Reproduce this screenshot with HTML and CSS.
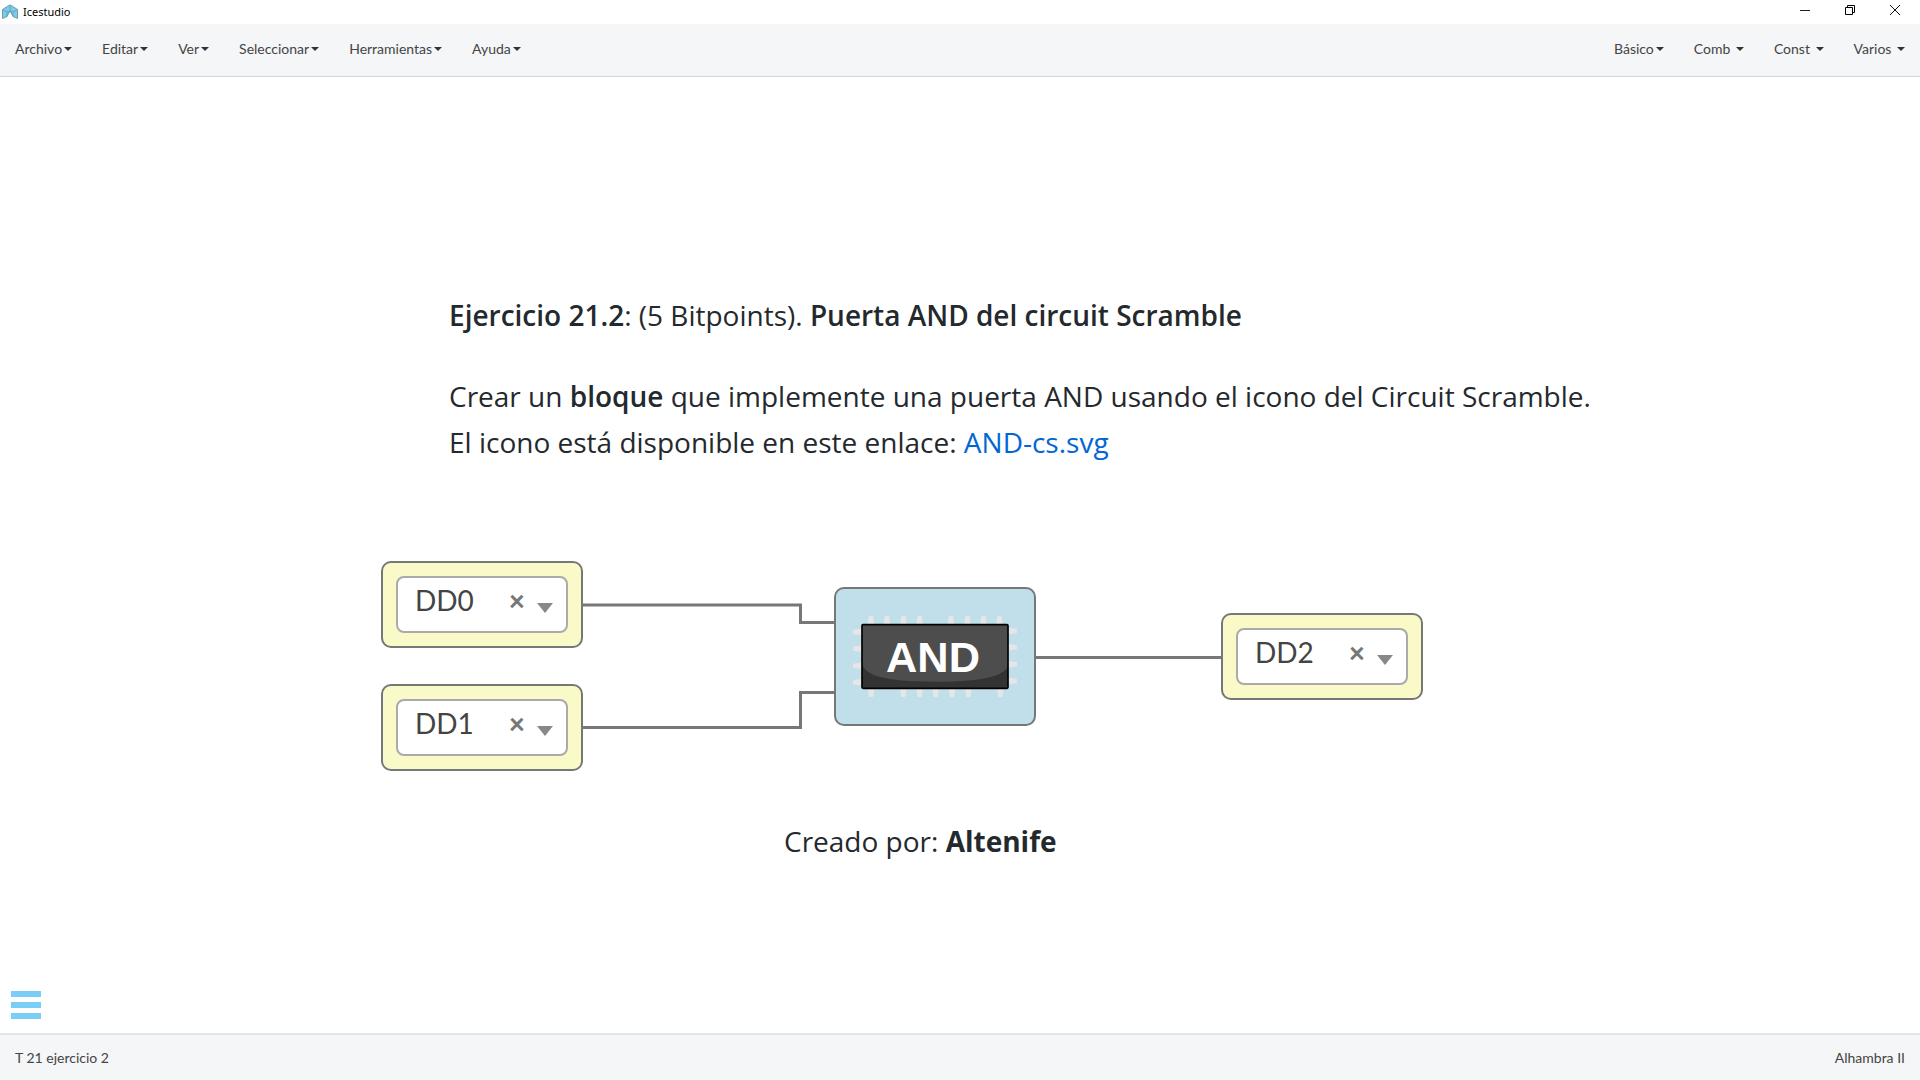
FILE: index.html
```html
<!DOCTYPE html>
<html lang="es">
<head>
<meta charset="utf-8">
<title>Icestudio</title>
<link rel="stylesheet" href="styles.css">
</head>
<body>
<header class="titlebar">
  <svg class="logo" width="16" height="16" viewBox="0 0 16 16"><path d="M.5 5.500 6 2 8 1l2 1 5.500 3.500v9L11 12.500 8 7l-3 5.500-4.500 2z" fill="#7ccbe9" stroke="#6d9db0"/><path d="M.5 5.500 5 8v4.500M15.500 5.500 11 8v4.500M8 1v6L5 8M8 7l3 1" fill="none" stroke="#5b9fba" stroke-width=".8"/></svg>
  <span class="app-name">Icestudio</span>
  <div class="window-controls">
    <button aria-label="Minimizar"><svg width="12" height="12" viewBox="0 0 12 12"><path d="M1 6.500h10" stroke="#222" fill="none"/></svg></button>
    <button aria-label="Restaurar"><svg width="12" height="12" viewBox="0 0 12 12"><path d="M1.500 3.500h7v7h-7zM3.500 3.500v-2h7v7h-2" stroke="#000" fill="none"/></svg></button>
    <button aria-label="Cerrar"><svg width="12" height="12" viewBox="0 0 12 12"><path d="M1 1l10 10M11 1 1 11" stroke="#111" fill="none"/></svg></button>
  </div>
</header>
<nav class="menubar">
  <div class="menu-group">
    <button class="menu">Archivo<i class="caret"></i></button>
    <button class="menu">Editar<i class="caret"></i></button>
    <button class="menu">Ver<i class="caret"></i></button>
    <button class="menu">Seleccionar<i class="caret"></i></button>
    <button class="menu">Herramientas<i class="caret"></i></button>
    <button class="menu">Ayuda<i class="caret"></i></button>
  </div>
  <div class="menu-group">
    <button class="menu">Básico<i class="caret"></i></button>
    <button class="menu">Comb <i class="caret"></i></button>
    <button class="menu">Const <i class="caret"></i></button>
    <button class="menu">Varios <i class="caret"></i></button>
  </div>
</nav>
<main class="canvas">
  <svg class="wires" width="1440" height="720" viewBox="0 0 1440 720"><path d="M582 528H800.500V545.500H835M582 650.500H800.500V615.500H835M1035 580.500H1222"/></svg>
  <section class="note statement">
    <p><b>Ejercicio 21.2</b>: (5 Bitpoints). <b>Puerta AND del circuit Scramble</b></p>
    <p>Crear un <b>bloque</b> que implemente una puerta AND usando el icono del Circuit Scramble.<br>El icono está disponible en este enlace: <a href="#">AND-cs.svg</a></p>
  </section>
  <div class="port port-a">
    <div class="combo">
      <select aria-label="Entrada A"><option>DD0</option></select>
      <button class="clear" aria-label="Borrar DD0">×</button>
      <i class="arrow"></i>
    </div>
  </div>
  <div class="port port-b">
    <div class="combo">
      <select aria-label="Entrada B"><option>DD1</option></select>
      <button class="clear" aria-label="Borrar DD1">×</button>
      <i class="arrow"></i>
    </div>
  </div>
  <div class="gate">
    <svg width="164" height="81" viewBox="99 138 492 243">
      <defs>
        <path id="pin" d="M-9 24V18L-6 0H6L9 18V24Z" fill="#e6e6e6"/>
      </defs>
      <g>
        <use href="#pin" x="153" y="138"/><use href="#pin" x="201" y="138"/><use href="#pin" x="250" y="138"/><use href="#pin" x="299" y="138"/>
        <use href="#pin" x="393" y="138"/><use href="#pin" x="442" y="138"/><use href="#pin" x="490" y="138"/><use href="#pin" x="538" y="138"/>
      </g>
      <g transform="translate(0 381) scale(1 -1)">
        <use href="#pin" x="153"/><use href="#pin" x="250"/><use href="#pin" x="299"/><use href="#pin" x="347"/>
        <use href="#pin" x="396"/><use href="#pin" x="445"/><use href="#pin" x="541"/>
      </g>
      <g transform="translate(99 0) rotate(-90)">
        <use href="#pin" x="-186"/><use href="#pin" x="-236"/><use href="#pin" x="-287"/><use href="#pin" x="-337"/>
      </g>
      <g transform="translate(591 0) rotate(90)">
        <use href="#pin" x="183"/><use href="#pin" x="232"/><use href="#pin" x="283"/><use href="#pin" x="333"/>
      </g>
      <rect x="126" y="164" width="438" height="191" rx="3" fill="#4d4d4d"/>
      <path d="M126 285C142 315 185 335 345 335S548 315 564 290V355H126Z" fill="#333"/>
      <rect x="126" y="164" width="438" height="191" rx="3" fill="none" stroke="#000" stroke-width="5"/>
      <text class="gate-label" x="339" y="307">AND</text>
    </svg>
  </div>
  <div class="port port-out">
    <div class="combo">
      <select aria-label="Salida"><option>DD2</option></select>
      <button class="clear" aria-label="Borrar DD2">×</button>
      <i class="arrow"></i>
    </div>
  </div>
  <p class="note author">Creado por: <b>Altenife</b></p>
  <button class="toolbox" aria-label="Herramientas"><i></i><i></i><i></i></button>
</main>
<footer class="statusbar">
  <span>T 21 ejercicio 2</span>
  <span>Alhambra II</span>
</footer>
</body>
</html>
```
FILE: styles.css
```css
* { box-sizing: border-box; }

body {
  margin: 0;
  min-height: 100vh;
  display: flex;
  flex-direction: column;
  background: #fff;
  color: #444;
  font: 14px/20px Lato, sans-serif;
}

button {
  margin: 0;
  padding: 0;
  border: 0;
  background: none;
  color: inherit;
  font: inherit;
}

.titlebar {
  display: flex;
  align-items: center;
  height: 24px;
  padding: 0 19px 0 2px;
}

.app-name {
  margin-left: 5px;
  color: #000;
  font: 11px/24px "Noto Sans", sans-serif;
}

.window-controls {
  display: flex;
  gap: 33px;
  height: 20px;
  margin: 0 0 4px auto;
}

.window-controls button {
  display: flex;
  align-items: center;
}

.menubar {
  display: flex;
  justify-content: space-between;
  height: 53px;
  background: #f4f6f8;
  border-bottom: 1px solid #d1d8dd;
}

.menu-group { display: flex; }

.menu {
  display: flex;
  align-items: center;
  padding: 0 15px 2px;
  white-space: pre;
}

.caret {
  margin-left: 2px;
  border: 4px solid transparent;
  border-top-color: #333;
  border-bottom: 0;
}

.canvas {
  position: relative;
  flex: 1;
  overflow: hidden;
}

.wires {
  position: absolute;
  left: 0;
  top: 0;
}

.wires path {
  fill: none;
  stroke: #777;
  stroke-width: 3;
}

.note {
  position: absolute;
  margin: 0;
  color: #24292e;
  font: 28px/46px "Open Sans", sans-serif;
  white-space: nowrap;
}

.note a {
  color: #0366d6;
  text-decoration: none;
}

.statement {
  left: 449px;
  top: 215px;
}

.statement p { margin: 0 0 35px; }

.statement b { font-weight: 600; }

.author {
  left: 784px;
  top: 741px;
}

.port,
.gate {
  position: absolute;
  border: 2px solid #777;
  border-radius: 10px;
}

.port {
  width: 202px;
  height: 87px;
  padding: 13px;
  background: #fafac8;
}

.port-a { left: 381px; top: 484px; }
.port-b { left: 381px; top: 607px; }
.port-out { left: 1221px; top: 536px; }

.combo {
  position: relative;
  height: 57px;
}

.combo select {
  width: 100%;
  height: 100%;
  padding: 0 0 10px 17px;
  appearance: none;
  background: #fff;
  border: 2px solid #aaa;
  border-radius: 8px;
  color: #444;
  font: 28px/40px Lato, sans-serif;
}

.clear {
  position: absolute;
  right: 43px;
  top: 4px;
  color: #777;
  font: 900 28px/40px Lato, sans-serif;
}

.arrow {
  position: absolute;
  right: 15px;
  top: 27px;
  border: 8px solid transparent;
  border-top: 10px solid #888;
  border-bottom: 0;
}

.gate {
  left: 834px;
  top: 510px;
  width: 202px;
  height: 139px;
  display: flex;
  align-items: center;
  justify-content: center;
  background: #c0dfeb;
}

.gate-label {
  fill: #fff;
  font: bold 130px "Liberation Sans", sans-serif;
  text-anchor: middle;
}

.toolbox {
  position: absolute;
  left: 11px;
  bottom: 14px;
  width: 30px;
  display: grid;
  gap: 5px;
}

.toolbox i {
  height: 6px;
  background: #7acdf4;
}

.statusbar {
  display: flex;
  align-items: center;
  justify-content: space-between;
  height: 47px;
  padding: 0 15px;
  background: #f4f6f8;
  border-top: 2px solid #e3e6e9;
}
```
